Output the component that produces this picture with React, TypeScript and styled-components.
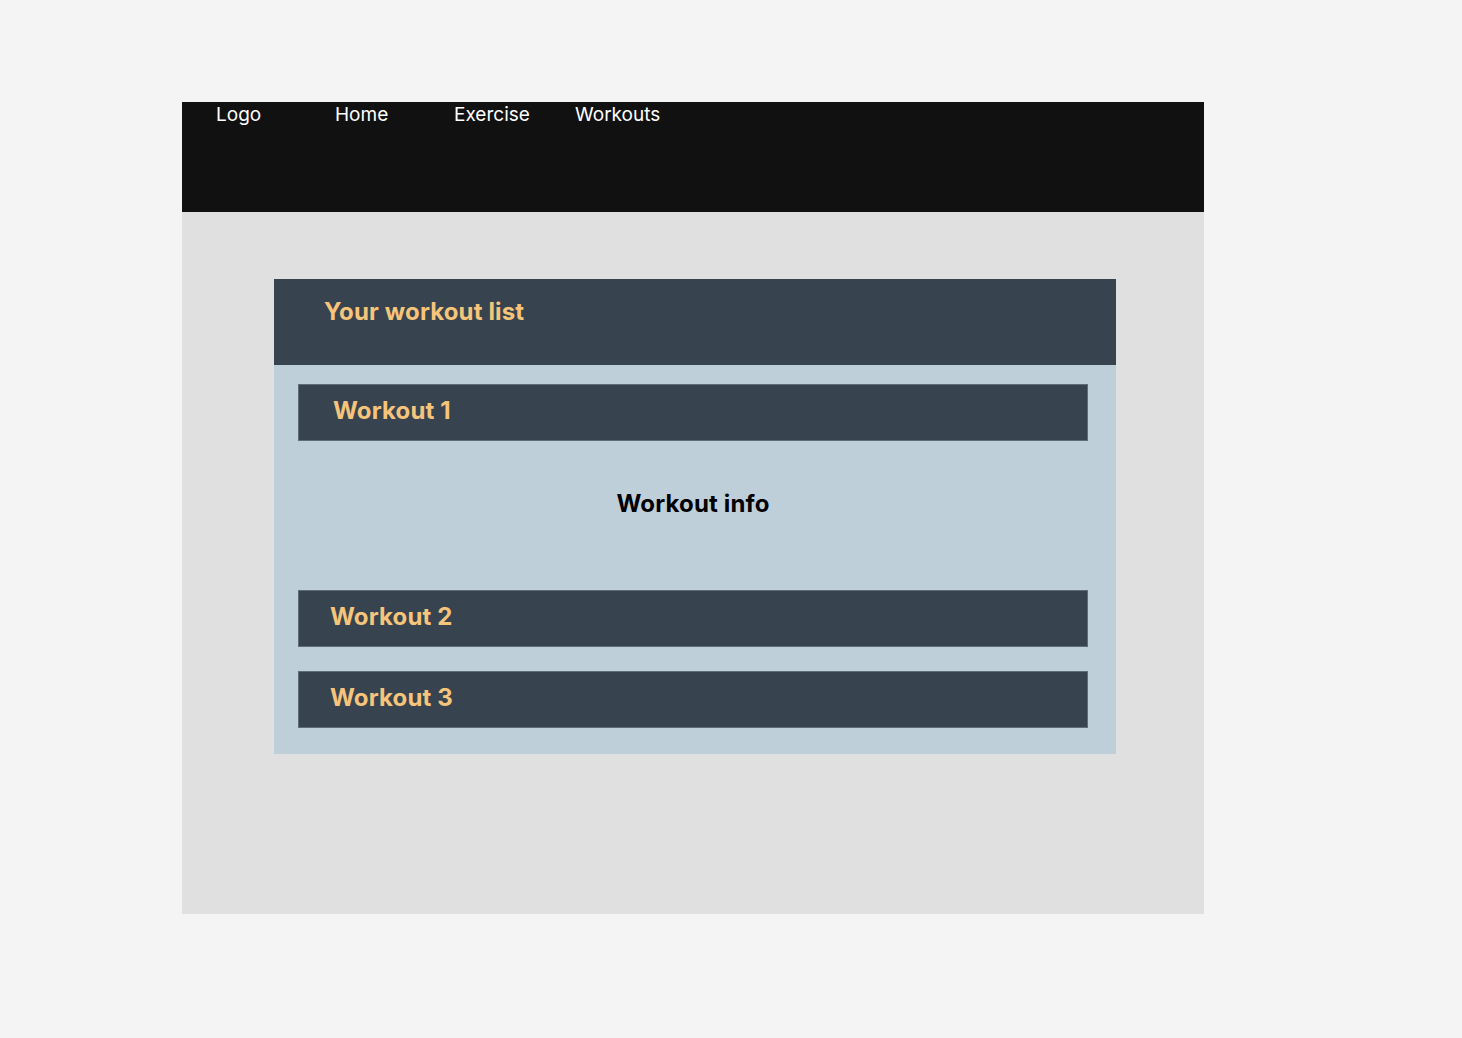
import React from 'react';
import styled, {createGlobalStyle} from 'styled-components';

const GlobalStyle = createGlobalStyle`
  html, body {
    margin: 0;
    padding: 0;
    background: #f4f4f4;
    font-family: Inter, "Noto Sans", sans-serif;
  }
`;

const Page = styled.div`
  padding: 102px 0 0 182px;
  min-height: 1038px;
  box-sizing: border-box;
`;

const Frame = styled.div`
  width: 1022px;
  height: 812px;
  background: #e0e0e0;
  display: flex;
  flex-direction: column;
`;

const Nav = styled.nav`
  height: 110px;
  background: #111111;
  display: flex;
  align-items: flex-start;
  flex-shrink: 0;
`;

const NavItem = styled.a<{ $w: number }>`
  width: ${(p) => p.$w}px;
  padding-left: 34px;
  box-sizing: border-box;
  color: #ffffff;
  font-size: 19px;
  line-height: 26px;
  text-decoration: none;
`;

const Content = styled.main`
  padding: 67px 88px 0 92px;
`;

const Card = styled.section`
  width: 842px;
`;

const CardHeader = styled.header`
  height: 86px;
  background: #37444f;
  padding: 17px 0 0 50px;
  box-sizing: border-box;
`;

const Title = styled.h1`
  margin: 0;
  color: #f6c47a;
  font-size: 24px;
  font-weight: 700;
  letter-spacing: 0.15px;
  line-height: 32px;
`;

const CardBody = styled.div`
  background: #bfcfd9;
  padding: 19px 28px 26px 24px;
  display: flex;
  flex-direction: column;
`;

const WorkoutRow = styled.div<{ $indent: number; $gap?: number }>`
  height: 57px;
  background: #37444f;
  border: 1px solid #5d6c77;
  box-sizing: border-box;
  display: flex;
  align-items: center;
  padding: 0 0 4px ${(p) => p.$indent - 1}px;
  margin-top: ${(p) => p.$gap ?? 0}px;
  color: #f6c47a;
  font-size: 24px;
  font-weight: 700;
  letter-spacing: 0.15px;
`;

const Info = styled.div`
  height: 149px;
  box-sizing: border-box;
  padding-top: 48px;
  text-align: center;
  color: #000000;
  font-size: 24px;
  font-weight: 700;
  letter-spacing: 0.15px;
  line-height: 30px;
`;

export default function App() {
    return (
        <>
            <GlobalStyle/>
            <Page>
                <Frame>
                    <Nav>
                        <NavItem $w={119}>Logo</NavItem>
                        <NavItem $w={119}>Home</NavItem>
                        <NavItem $w={121}>Exercise</NavItem>
                        <NavItem $w={120}>Workouts</NavItem>
                    </Nav>
                    <Content>
                        <Card>
                            <CardHeader>
                                <Title>Your workout list</Title>
                            </CardHeader>
                            <CardBody>
                                <WorkoutRow $indent={35}>Workout 1</WorkoutRow>
                                <Info>Workout info</Info>
                                <WorkoutRow $indent={32}>Workout 2</WorkoutRow>
                                <WorkoutRow $indent={32} $gap={24}>Workout 3</WorkoutRow>
                            </CardBody>
                        </Card>
                    </Content>
                </Frame>
            </Page>
        </>
    );
}
